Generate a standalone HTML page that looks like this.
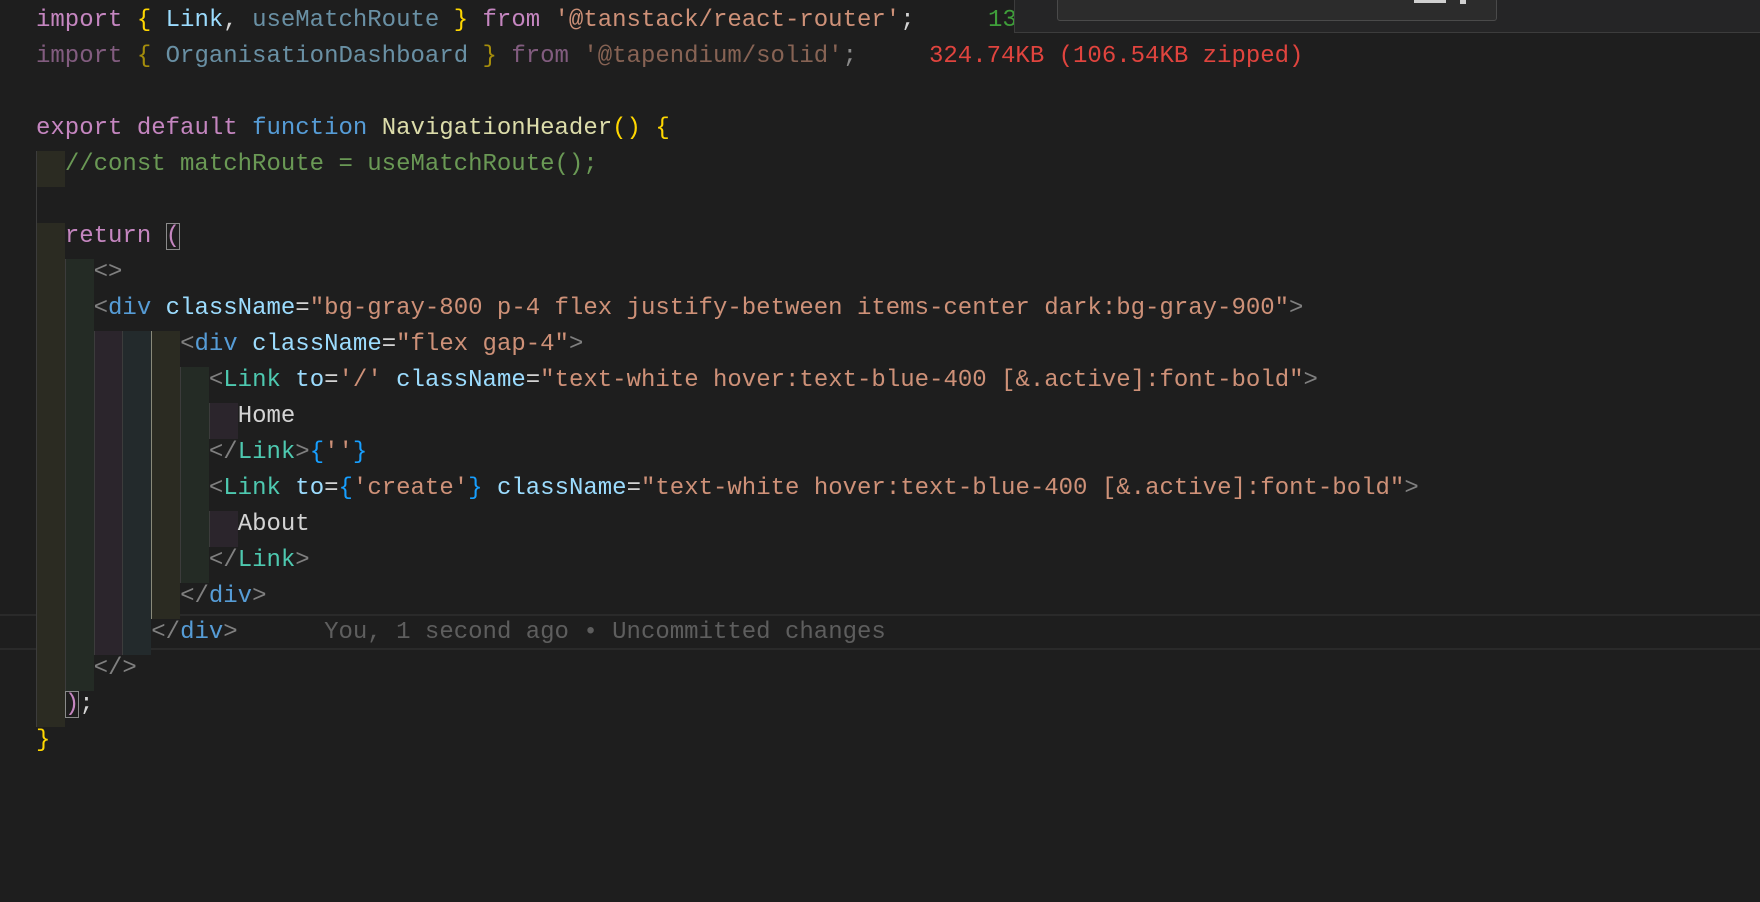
<!DOCTYPE html>
<html><head><meta charset="utf-8"><style>
html,body{margin:0;padding:0;background:#1e1e1e;width:1760px;height:902px;overflow:hidden}
.l{position:absolute;left:36px;height:36px;line-height:36px;font:24px "Liberation Mono",monospace;white-space:pre;color:#d4d4d4}
.a,.b,.c,.d{display:inline-block;height:36px;vertical-align:top;box-shadow:inset 1px 0 0 #3c3c3c}
.a{background:#2b2b22}.b{background:#242b25}.c{background:#2b252c}.d{background:#232a2c}
.act{box-shadow:inset 1px 0 0 #8a8a7a}
.k{color:#c586c0}.y{color:#ffd700}.v{color:#9cdcfe}.s{color:#ce9178}.f{color:#569cd6}.fn{color:#dcdcaa}
.cm{color:#6a9955}.p{color:#808080}.t{color:#4ec9b0}.bl{color:#179fff}.w{color:#d4d4d4}
.dim{opacity:.6}
.box{outline:1px solid #8a8a8a;outline-offset:-1px}
</style></head><body>
<div style="position:absolute;left:0;top:614px;width:1760px;height:32px;border-top:2px solid #2a2a2a;border-bottom:2px solid #2a2a2a"></div>

<div class="l" style="top:7px"><span class="k">import</span> <span class="y">{</span> <span class="v">Link</span>, <span class="v dim">useMatchRoute</span> <span class="y">}</span> <span class="k">from</span> <span class="s">'@tanstack/react-router'</span>;</div>
<div class="l dim" style="top:43px"><span class="k">import</span> <span class="y">{</span> <span class="v">OrganisationDashboard</span> <span class="y">}</span> <span class="k">from</span> <span class="s">'@tapendium/solid'</span>;</div>
<div class="l" style="top:115px"><span class="k">export</span> <span class="k">default</span> <span class="f">function</span> <span class="fn">NavigationHeader</span><span class="y">()</span> <span class="y">{</span></div>
<div class="l" style="top:151px"><span class="a">  </span><span class="cm">//const matchRoute = useMatchRoute();</span></div>
<div class="l" style="top:187px"><span style="display:inline-block;width:1px;height:36px;background:#3c3c3c;vertical-align:top"></span></div>
<div class="l" style="top:223px"><span class="a">  </span><span class="k">return</span> <span class="k box">(</span></div>
<div class="l" style="top:259px"><span class="a">  </span><span class="b">  </span><span class="p">&lt;&gt;</span></div>
<div class="l" style="top:295px"><span class="a">  </span><span class="b">  </span><span class="p">&lt;</span><span class="f">div</span> <span class="v">className</span><span class="w">=</span><span class="s">"bg-gray-800 p-4 flex justify-between items-center dark:bg-gray-900"</span><span class="p">&gt;</span></div>
<div class="l" style="top:331px"><span class="a">  </span><span class="b">  </span><span class="c">  </span><span class="d">  </span><span class="a act">  </span><span class="p">&lt;</span><span class="f">div</span> <span class="v">className</span><span class="w">=</span><span class="s">"flex gap-4"</span><span class="p">&gt;</span></div>
<div class="l" style="top:367px"><span class="a">  </span><span class="b">  </span><span class="c">  </span><span class="d">  </span><span class="a act">  </span><span class="b">  </span><span class="p">&lt;</span><span class="t">Link</span> <span class="v">to</span><span class="w">=</span><span class="s">'/'</span> <span class="v">className</span><span class="w">=</span><span class="s">"text-white hover:text-blue-400 [&amp;.active]:font-bold"</span><span class="p">&gt;</span></div>
<div class="l" style="top:403px"><span class="a">  </span><span class="b">  </span><span class="c">  </span><span class="d">  </span><span class="a act">  </span><span class="b">  </span><span class="c">  </span>Home</div>
<div class="l" style="top:439px"><span class="a">  </span><span class="b">  </span><span class="c">  </span><span class="d">  </span><span class="a act">  </span><span class="b">  </span><span class="p">&lt;/</span><span class="t">Link</span><span class="p">&gt;</span><span class="bl">{</span><span class="s">''</span><span class="bl">}</span></div>
<div class="l" style="top:475px"><span class="a">  </span><span class="b">  </span><span class="c">  </span><span class="d">  </span><span class="a act">  </span><span class="b">  </span><span class="p">&lt;</span><span class="t">Link</span> <span class="v">to</span><span class="w">=</span><span class="bl">{</span><span class="s">'create'</span><span class="bl">}</span> <span class="v">className</span><span class="w">=</span><span class="s">"text-white hover:text-blue-400 [&amp;.active]:font-bold"</span><span class="p">&gt;</span></div>
<div class="l" style="top:511px"><span class="a">  </span><span class="b">  </span><span class="c">  </span><span class="d">  </span><span class="a act">  </span><span class="b">  </span><span class="c">  </span>About</div>
<div class="l" style="top:547px"><span class="a">  </span><span class="b">  </span><span class="c">  </span><span class="d">  </span><span class="a act">  </span><span class="b">  </span><span class="p">&lt;/</span><span class="t">Link</span><span class="p">&gt;</span></div>
<div class="l" style="top:583px"><span class="a">  </span><span class="b">  </span><span class="c">  </span><span class="d">  </span><span class="a act">  </span><span class="p">&lt;/</span><span class="f">div</span><span class="p">&gt;</span></div>
<div class="l" style="top:619px"><span class="a">  </span><span class="b">  </span><span class="c">  </span><span class="d">  </span><span class="p">&lt;/</span><span class="f">div</span><span class="p">&gt;</span>      <span style="color:#5e5e5e">You, 1 second ago • Uncommitted changes</span></div>
<div class="l" style="top:655px"><span class="a">  </span><span class="b">  </span><span class="p">&lt;/&gt;</span></div>
<div class="l" style="top:691px"><span class="a">  </span><span class="k box">)</span>;</div>
<div class="l" style="top:727px"><span class="y">}</span></div>

<div class="l" style="top:7px;left:988px;color:#3f9f3a">13.26KB (5.24KB zipped)</div>
<div class="l" style="top:43px;left:929px;color:#e0443e">324.74KB (106.54KB zipped)</div>

<div style="position:absolute;left:1014px;top:-2px;width:760px;height:35px;background:#252526;border:1px solid #3c3c3c;box-sizing:border-box"></div>
<div style="position:absolute;left:1057px;top:-2px;width:440px;height:23px;background:#2c2c2c;border:1px solid #4a4a4a;border-radius:3px;box-sizing:border-box"></div>
<div style="position:absolute;left:1414px;top:0;width:32px;height:3px;background:#d0d0d0"></div>
<div style="position:absolute;left:1460px;top:0;width:6px;height:4px;background:#d0d0d0"></div>
</body></html>
